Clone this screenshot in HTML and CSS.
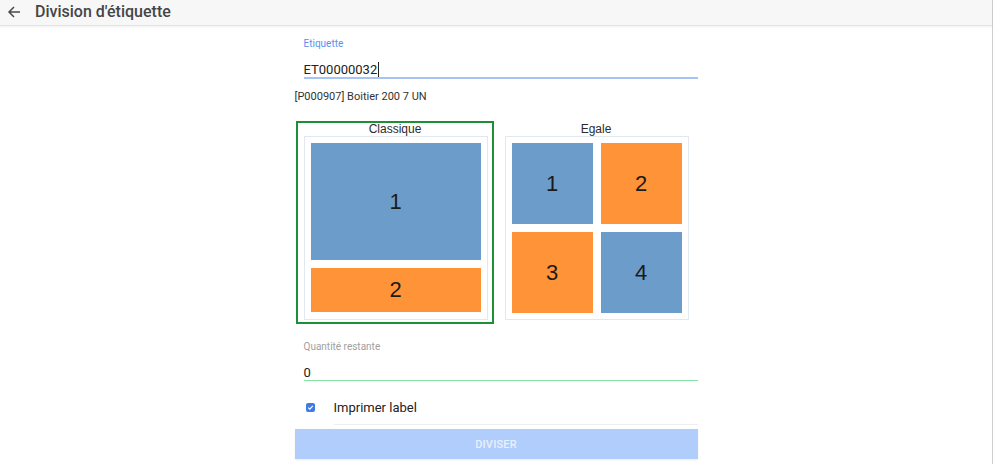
FILE: index.html
```html
<!DOCTYPE html>
<html lang="fr">
<head>
<meta charset="utf-8">
<title>Division d'étiquette</title>
<link rel="stylesheet" href="styles.css">
</head>
<body>
<div class="page">
  <header class="topbar">
    <svg class="back" width="14" height="14" viewBox="0 0 14 14" aria-hidden="true">
      <path d="M13 7H2M7 2L2 7l5 5" fill="none" stroke="#4a4a4a" stroke-width="1.5"/>
    </svg>
    <span class="title">Division d'étiquette</span>
  </header>
  <main class="form">
    <div class="field-label blue">Etiquette</div>
    <div class="field-input focus-blue">ET00000032<span class="caret"></span></div>
    <div class="product">[P000907] Boitier 200 7 UN</div>

    <div class="options">
      <div class="option selected">
        <div class="option-title">Classique</div>
        <div class="preview classic">
          <div class="tile blue big">1</div>
          <div class="tile orange small">2</div>
        </div>
      </div>
      <div class="option">
        <div class="option-title">Egale</div>
        <div class="preview equal">
          <div class="tile blue">1</div>
          <div class="tile orange">2</div>
          <div class="tile orange">3</div>
          <div class="tile blue">4</div>
        </div>
      </div>
    </div>

    <div class="field-label grey">Quantité restante</div>
    <div class="field-input focus-green">0</div>

    <div class="check-row">
      <span class="checkbox">
        <svg width="9" height="9" viewBox="0 0 9 9" aria-hidden="true"><path d="M2.2 4.6l1.6 1.5 3-3.3" fill="none" stroke="#fff" stroke-width="1.2"/></svg>
      </span>
      <span class="check-label">Imprimer label</span>
    </div>
    <div class="divider"></div>
    <button class="submit" type="button">DIVISER</button>
  </main>
</div>
</body>
</html>
```
FILE: styles.css
```css
html, body {
  margin: 0;
  padding: 0;
  background: #fff;
  font-family: Roboto, "Liberation Sans", Arial, sans-serif;
}
.page {
  width: 992px;
  height: 464px;
  border-right: 1px solid #cfcfcf;
  box-sizing: content-box;
}
.topbar {
  height: 25px;
  background: #f7f7f7;
  border-bottom: 1px solid #e2e2e2;
  box-shadow: 0 1px 2px rgba(0,0,0,0.06);
  display: flex;
  align-items: center;
}
.back {
  margin-left: 7px;
  margin-top: -2px;
}
.title {
  margin-left: 14px;
  font-size: 16px;
  font-weight: 500;
  color: #454545;
  margin-top: -3px;
}
.form {
  width: 403px;
  margin: 0 auto;
  padding-top: 12px;
  display: flex;
  flex-direction: column;
}
.field-label {
  margin-left: 9px;
  font-size: 10px;
  line-height: 12px;
  height: 12px;
}
.field-label.blue { color: #5a8ff0; }
.field-label.grey { color: #a0a0a0; margin-top: 17px; }
.field-input {
  margin-left: 9px;
  padding-top: 12px;
  font-size: 13px;
  line-height: 15px;
  height: 15px;
  color: #222;
  display: flex;
  align-items: center;
}
.focus-blue { border-bottom: 2px solid #a6c3f7; }
.focus-green { border-bottom: 1.5px solid #86e3a8; }
.caret {
  display: inline-block;
  width: 1px;
  height: 15px;
  background: #222;
  margin-left: 1px;
}
.product {
  margin-top: 11px;
  font-size: 11px;
  line-height: 14px;
  color: #333;
}
.options {
  margin-top: 17px;
  margin-left: 1px;
  display: flex;
  gap: 3px;
}
.option {
  width: 198px;
  box-sizing: border-box;
  border: 2px solid transparent;
  padding: 0 5px 2px 6px;
}
.option.selected { border-color: #1f8f35; }
.option-title {
  text-align: center;
  font-family: "Liberation Sans", Arial, sans-serif;
  font-size: 12px;
  line-height: 13px;
  height: 13px;
  color: #2b2b2b;
}
.preview {
  width: 184px;
  height: 184px;
  box-sizing: border-box;
  border: 1px solid #e1e8f1;
  padding: 6px;
}
.preview.classic {
  display: flex;
  flex-direction: column;
  gap: 8px;
}
.preview.equal {
  display: grid;
  grid-template-columns: 81px 81px;
  grid-template-rows: 81px 81px;
  gap: 8px;
}
.tile {
  display: flex;
  align-items: center;
  justify-content: center;
  font-family: "Liberation Sans", Arial, sans-serif;
  font-size: 22px;
  color: #1b1b1b;
}
.tile.blue { background: #6c9cc9; }
.tile.orange { background: #fe9337; }
.tile.big { height: 117px; }
.tile.small { height: 44px; }
.check-row {
  margin-top: 16px;
  height: 20px;
  display: flex;
  align-items: center;
}
.checkbox {
  margin-left: 11px;
  width: 9px;
  height: 9px;
  border-radius: 2px;
  background: #3d7be6;
  display: flex;
}
.check-label {
  margin-left: 19px;
  font-size: 13px;
  color: #222;
}
.divider {
  margin-top: 7px;
  margin-left: 39px;
  height: 1px;
  background: #eeeeee;
}
.submit {
  margin-top: 4px;
  height: 30px;
  border: none;
  background: #b0cdfb;
  color: #e9f1fe;
  font-family: Roboto, sans-serif;
  font-size: 11px;
  font-weight: 500;
  letter-spacing: 0.2px;
  padding: 0;
  box-shadow: 0 1px 2px rgba(0,0,0,0.08);
}
```
